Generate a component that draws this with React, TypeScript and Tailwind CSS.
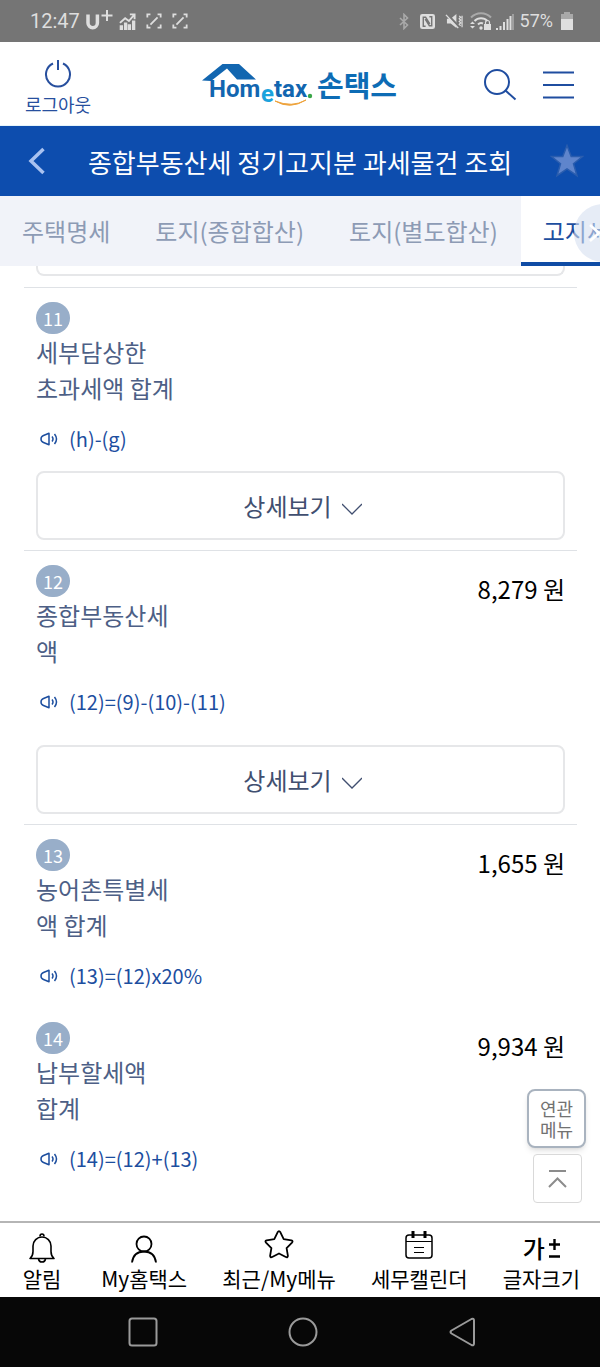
import React, { useState } from 'react';
import clsx from 'clsx';

interface TaxItem {
  no: number;
  lines: string[];
  formula: string;
  amount?: string;
  hasDetail?: boolean;
  divider?: boolean;
}

const TABS = ['주택명세', '토지(종합합산)', '토지(별도합산)', '고지세액'];

const ITEMS: TaxItem[] = [
  { no: 11, lines: ['세부담상한', '초과세액 합계'], formula: '(h)-(g)', hasDetail: true, divider: true },
  { no: 12, lines: ['종합부동산세', '액'], formula: '(12)=(9)-(10)-(11)', amount: '8,279 원', hasDetail: true, divider: true },
  { no: 13, lines: ['농어촌특별세', '액 합계'], formula: '(13)=(12)x20%', amount: '1,655 원', divider: true },
  { no: 14, lines: ['납부할세액', '합계'], formula: '(14)=(12)+(13)', amount: '9,934 원' },
];

const ExpandIcon = () => (
  <svg width="16" height="16" viewBox="0 0 18 18" fill="none" stroke="currentColor" strokeWidth="2">
    <path d="M1.5 5v-3.500H5M13 1.500h3.500V5M1.500 13v3.500H5M13 16.500h3.500V13M5 13l8-8" />
  </svg>
);

const StatusBar = () => (
  <div className="flex h-[42px] items-center justify-between bg-[#757575] pl-[30px] pr-[27px] font-['Roboto',sans-serif] text-xl text-[#dedede]">
    <div className="flex items-center">
      <span>12:47</span>
      <svg className="ml-1.5" width="27" height="24" viewBox="0 0 27 24" fill="none" stroke="currentColor">
        <path d="M2 5.500v8.500a4.700 4.700 0 0 0 9.400 0V5.500" strokeWidth="3.500" />
        <path d="M21 1v11M15.500 6.500h11" strokeWidth="2" />
      </svg>
      <svg className="ml-1.5" width="17" height="17" viewBox="0 0 18 18" fill="none" stroke="currentColor">
        <path d="M2.500 18v-5M7 18v-8M11 18v-6M15.500 18V8" strokeWidth="3.500" />
        <path d="M1 10.500l5.500-5 4 3L16 2M11.500 1.500h5v5" strokeWidth="2" />
      </svg>
      <span className="ml-2.5"><ExpandIcon /></span>
      <span className="ml-2.5"><ExpandIcon /></span>
    </div>
    <div className="flex items-center">
      <svg className="opacity-50" width="10" height="17" viewBox="0 0 10 17" fill="none" stroke="currentColor" strokeWidth="1.600">
        <path d="M1 5l7.500 7-3.500 3.500V1.500L8.500 5 1 12" />
      </svg>
      <svg className="ml-[11px]" width="15" height="15" viewBox="0 0 16 16" fill="none">
        <rect x="0" y="0" width="16" height="16" rx="2.500" fill="currentColor" />
        <path d="M6 13H3.500V3.500H6l4.500 7M10 3h2.500v9.500H10L5.500 5.500" stroke="#757575" strokeWidth="1.500" />
      </svg>
      <svg className="ml-2.5" width="19" height="17" viewBox="0 0 20 18" fill="none" stroke="currentColor">
        <path d="M2 6h4l6-5v15l-6-5H2z" fill="currentColor" stroke="none" />
        <path d="M2 1l13 14" stroke="#757575" strokeWidth="2.500" />
        <path d="M1 2l13 14" strokeWidth="1.500" />
        <path d="M15 3l1.500 1.500L15 6l1.500 1.500L15 9l1.500 1.500L15 12l1.500 1.500M18 3v12" strokeWidth="1.300" />
      </svg>
      <svg className="ml-1.5" width="22" height="18" viewBox="0 0 22 18" fill="none" stroke="currentColor" strokeWidth="2">
        <path d="M1 5.500a14 14 0 0 1 20 0" opacity="0.5" />
        <path d="M4.500 9a9 9 0 0 1 13 0M8 12.500a4.500 4.500 0 0 1 5 -1" />
        <circle cx="11" cy="16" r="1.700" fill="currentColor" stroke="none" />
        <path d="M0 12h5l-2.500-2.500zM0 14h5l-2.500 2.500z" fill="currentColor" stroke="none" />
        <rect x="14" y="12" width="7" height="6" fill="currentColor" stroke="none" />
        <path d="M15.500 12v-1.500a2 2 0 0 1 4 0V12" strokeWidth="1.200" />
      </svg>
      <svg className="ml-1" width="18" height="17" viewBox="0 0 18 17" fill="none" stroke="currentColor" strokeWidth="2">
        <path d="M1 17v-2M4.500 17v-4M8 17v-8M11.500 17V6M14.500 17V3" />
        <path d="M17 17V1" opacity="0.4" />
      </svg>
      <span className="ml-1.5 text-lg">57%</span>
      <svg className="ml-2" width="12" height="18" viewBox="0 0 12 18" fill="currentColor">
        <path d="M3 0h6v2h3v5H0V2h3z" opacity="0.5" />
        <path d="M0 7h12v11H0z" />
      </svg>
    </div>
  </div>
);

const Logo = () => (
  <svg width="196" height="46" viewBox="0 0 196 46" role="img" aria-label="Hometax 손택스">
    <path d="M0 17.500L20.500 1h16.500l17 15.500H35L25 5.500 9 18z" fill="#1266b0" />
    <g fontFamily="Roboto, sans-serif" fontWeight="700" fontSize="24">
      <text x="7" y="34" fill="#1266b0">Hom</text>
      <text x="59" y="39" fill="#1ba3dd">e</text>
      <text x="72" y="34" fill="#1266b0">tax</text>
    </g>
    <circle cx="108" cy="33" r="2.200" fill="#3aa648" />
    <path d="M73 38q15 9 31 -1q-14 8-31 1z" fill="#eea33c" stroke="#eea33c" />
    <text x="115" y="34" fill="#0d6cb5" fontFamily="Noto Sans CJK KR, sans-serif" fontWeight="700" fontSize="29">손택스</text>
  </svg>
);

const Header = () => (
  <header className="flex items-center justify-between border-b border-[#e6f4fa] pl-6 pr-[26px]">
    <button className="flex h-[83px] w-[68px] flex-col items-center pt-[17px] text-[#274f9e]">
      <svg width="28" height="29" viewBox="0 0 28 29" fill="none" stroke="currentColor" strokeWidth="2">
        <path d="M9 4.500a12 12 0 1 0 10 0M14 1v10" />
      </svg>
      <span className="text-lg leading-8">로그아웃</span>
    </button>
    <a href="#" className="pl-6 pt-1"><Logo /></a>
    <div className="flex items-center gap-[26px] pt-0.5 text-[#1f4da0]">
      <button aria-label="검색">
        <svg width="33" height="32" viewBox="0 0 33 32" fill="none" stroke="currentColor" strokeWidth="2">
          <circle cx="13" cy="13" r="12" />
          <path d="M21.500 21.500l10 9" />
        </svg>
      </button>
      <button aria-label="전체메뉴">
        <svg width="31" height="28" viewBox="0 0 31 28" stroke="currentColor" strokeWidth="2">
          <path d="M0 1.500h31M0 14h31M0 26.500h31" />
        </svg>
      </button>
    </div>
  </header>
);

const SpeakerIcon = () => (
  <svg width="19" height="14" viewBox="0 0 19 14" fill="none" stroke="currentColor" strokeWidth="1.500">
    <path d="M9 1.200v11.600L3.500 10.500Q1 9.500 1 7t2.500-3.500z" strokeLinejoin="round" />
    <path d="M12 4.500q2 2.500 0 5M14.500 2q4 5 0 10" />
  </svg>
);

const ItemRow = ({ item }: { item: TaxItem }) => (
  <section className={clsx('px-3 pt-3.5', item.divider && 'border-t border-[#dfe2e6]')}>
    <div className="flex items-start justify-between">
      <div>
        <span className="flex h-8 w-[34px] items-center justify-center rounded-full bg-[#98aec9] text-lg text-white">{item.no}</span>
        <h2 className="text-2xl leading-9 text-[#4d5f86]">
          {item.lines.map(line => (
            <span key={line} className="block">{line}</span>
          ))}
        </h2>
      </div>
      {item.amount && <p className="mt-2 text-2xl leading-8 text-black">{item.amount}</p>}
    </div>
    <p className="mt-[17px] flex items-center gap-2.5 pl-1 text-xl leading-8 text-[#1c4e9f]">
      <SpeakerIcon />
      {item.formula}
    </p>
    {item.hasDetail ? (
      <button
        className={clsx(
          'mb-2.5 flex h-[69px] w-full items-center justify-center gap-2.5 rounded-lg border-2 border-[#e6e7e9] pl-1 text-2xl text-[#414f70]',
          item.amount ? 'mt-[27px]' : 'mt-4'
        )}
      >
        상세보기
        <svg className="mt-1.5" width="20" height="12" viewBox="0 0 20 12" fill="none" stroke="currentColor" strokeWidth="1.300">
          <path d="M0 1l10 10L20 1" />
        </svg>
      </button>
    ) : (
      <div className="h-4" />
    )}
  </section>
);

const MENU = [
  {
    label: '알림',
    icon: (
      <svg width="26" height="30" viewBox="0 0 26 30" fill="none" stroke="currentColor" strokeWidth="1.600">
        <path d="M1 25.500q3-2.500 3-7V13a9 9 0 0 1 18 0v5.500q0 4.500 3 7z" strokeLinejoin="round" />
        <path d="M9.500 26q.5 3 3.500 3t3.500-3M11 3.500q0-2.500 2-2.500t2 2.500" />
      </svg>
    ),
  },
  {
    label: 'My홈택스',
    icon: (
      <svg width="26" height="28" viewBox="0 0 26 28" fill="none" stroke="currentColor" strokeWidth="1.800">
        <circle cx="13" cy="9" r="7.500" />
        <path d="M1 27.500q1.500-11 12-11t12 11" />
      </svg>
    ),
  },
  {
    label: '최근/My메뉴',
    icon: (
      <svg className="mb-1" width="30" height="29" viewBox="0 0 30 29" fill="none" stroke="currentColor" strokeWidth="1.800" strokeLinejoin="round">
        <path d="M13.600 2.300q1.400-2.400 2.800 0l3.300 6.900 7.700 1.200q2 .6.600 2.200l-5.400 5.500 1.300 7.700q0 2-2.100 1.200L15 23.500 8.200 27q-2.100.8-2.100-1.200l1.300-7.700L2 12.600q-1.400-1.600.6-2.200l7.700-1.200z" />
      </svg>
    ),
  },
  {
    label: '세무캘린더',
    icon: (
      <svg className="mb-1" width="28" height="28" viewBox="0 0 28 28" fill="none" stroke="currentColor" strokeWidth="1.500">
        <rect x="1" y="4" width="26" height="23" rx="3" />
        <path d="M1 10.500h26M9 16.500h10M9 21.500h10" strokeWidth="1" />
        <path d="M8 0v7M20 0v7" strokeWidth="3" />
      </svg>
    ),
  },
  {
    label: '글자크기',
    icon: (
      <span className="flex h-[30px] items-center gap-1 text-2xl font-medium">
        가
        <svg width="11" height="19" viewBox="0 0 11 19" stroke="currentColor" strokeWidth="2.400">
          <path d="M0 5.500h11M5.500 0v11M0 17.500h11" />
        </svg>
      </span>
    ),
  },
];

const App: React.FC = () => {
  const [activeTab, setActiveTab] = useState(3);

  return (
    <div className="flex min-h-screen flex-col overflow-hidden bg-white font-['Noto_Sans_CJK_KR',sans-serif]">
      <StatusBar />
      <Header />

      {/* Title bar */}
      <div className="flex h-[70px] items-center justify-between bg-[#0d4dae] pl-7 pr-4">
        <button aria-label="뒤로" className="text-[#a9c2f0]">
          <svg width="18" height="28" viewBox="0 0 18 28" fill="none" stroke="currentColor" strokeWidth="3.500">
            <path d="M15.500 2L3 14l12.500 12" />
          </svg>
        </button>
        <h1 className="whitespace-nowrap pl-1 text-[26px] text-white">종합부동산세 정기고지분 과세물건 조회</h1>
        <button aria-label="즐겨찾기" className="text-[#5f85cc]">
          <svg width="34" height="34" viewBox="0 0 34 34" fill="currentColor" stroke="#2a5dae" strokeWidth="1.500">
            <path d="M17 1.500l4.200 11h11.300l-9 7.200 3.500 12L17 25 7 31.700l3.500-12-9-7.200h11.300z" />
          </svg>
        </button>
      </div>

      {/* Tabs */}
      <nav className="relative flex h-[70px] shrink-0 gap-px overflow-hidden bg-[#f1f3f9]">
        {TABS.map((tab, i) => (
          <button
            key={tab}
            onClick={() => setActiveTab(i)}
            className={clsx(
              'shrink-0 whitespace-nowrap border-b-4 px-[22px] pt-1 text-2xl',
              i === activeTab ? 'border-[#0f4ca5] bg-white text-[#1c4e9f]' : 'border-transparent text-[#8d9bb5]'
            )}
          >
            {tab}
          </button>
        ))}
        <button aria-label="다음 탭" className="absolute -right-8 top-2 flex size-[58px] items-center rounded-full bg-[#d5e0f0]/60 pl-3.5">
          <svg width="14" height="20" viewBox="0 0 14 20" fill="none" stroke="#ffffff" strokeWidth="2.500">
            <path d="M2 2l9 8-9 8" />
          </svg>
        </button>
      </nav>

      <main className="relative grow pb-7 pl-6 pr-[23px]">
        <div className="mx-3 mb-[11px] h-2.5 rounded-b-lg border-2 border-t-0 border-[#e6e7e9]" />
        {ITEMS.map(item => (
          <ItemRow key={item.no} item={item} />
        ))}

        {/* Floating shortcuts */}
        <div className="absolute bottom-[18px] right-3.5 flex flex-col items-end gap-1.5">
          <button className="flex size-[59px] flex-col items-center justify-center rounded-lg border-2 border-[#a9b3bf] bg-white text-lg leading-[21px] text-[#727272] shadow-md">
            <span className="block">연관</span>
            <span className="block">메뉴</span>
          </button>
          <button aria-label="맨 위로" className="mr-1 flex size-[49px] items-center justify-center rounded border border-[#d9d9d9] bg-white">
            <svg width="19" height="18" viewBox="0 0 19 18" fill="none" stroke="#8c8c8c" strokeWidth="2">
              <path d="M1 1h17M1 17l8.500-8.500L18 17" />
            </svg>
          </button>
        </div>
      </main>

      <footer>
        <nav className="flex h-[76px] items-end justify-between border-t-2 border-[#b5b5b5] pb-1 pl-[18px] pr-5 text-black">
          {MENU.map(({ label, icon }) => (
            <button key={label} className="flex min-w-12 flex-col items-center whitespace-nowrap text-[21px] leading-[30px]">
              {icon}
              {label}
            </button>
          ))}
        </nav>
        <div className="flex h-[70px] items-center justify-center gap-[130px] bg-[#070707] pl-1.5 text-[#9a9a9a]">
          <button aria-label="최근 앱">
            <svg width="30" height="30" viewBox="0 0 30 30" fill="none" stroke="currentColor" strokeWidth="2">
              <rect x="1.500" y="1.500" width="27" height="27" rx="2.500" />
            </svg>
          </button>
          <button aria-label="홈">
            <svg width="30" height="30" viewBox="0 0 30 30" fill="none" stroke="currentColor" strokeWidth="2">
              <circle cx="15" cy="15" r="13.500" />
            </svg>
          </button>
          <button aria-label="뒤로 가기">
            <svg width="30" height="30" viewBox="0 0 30 30" fill="none" stroke="currentColor" strokeWidth="2" strokeLinejoin="round">
              <path d="M3.500 13.500q-2 1.500 0 3L23.500 28q2.500 1 2.500-1.500v-23Q26 1 23.500 2z" />
            </svg>
          </button>
        </div>
      </footer>
    </div>
  );
};

export default App;
